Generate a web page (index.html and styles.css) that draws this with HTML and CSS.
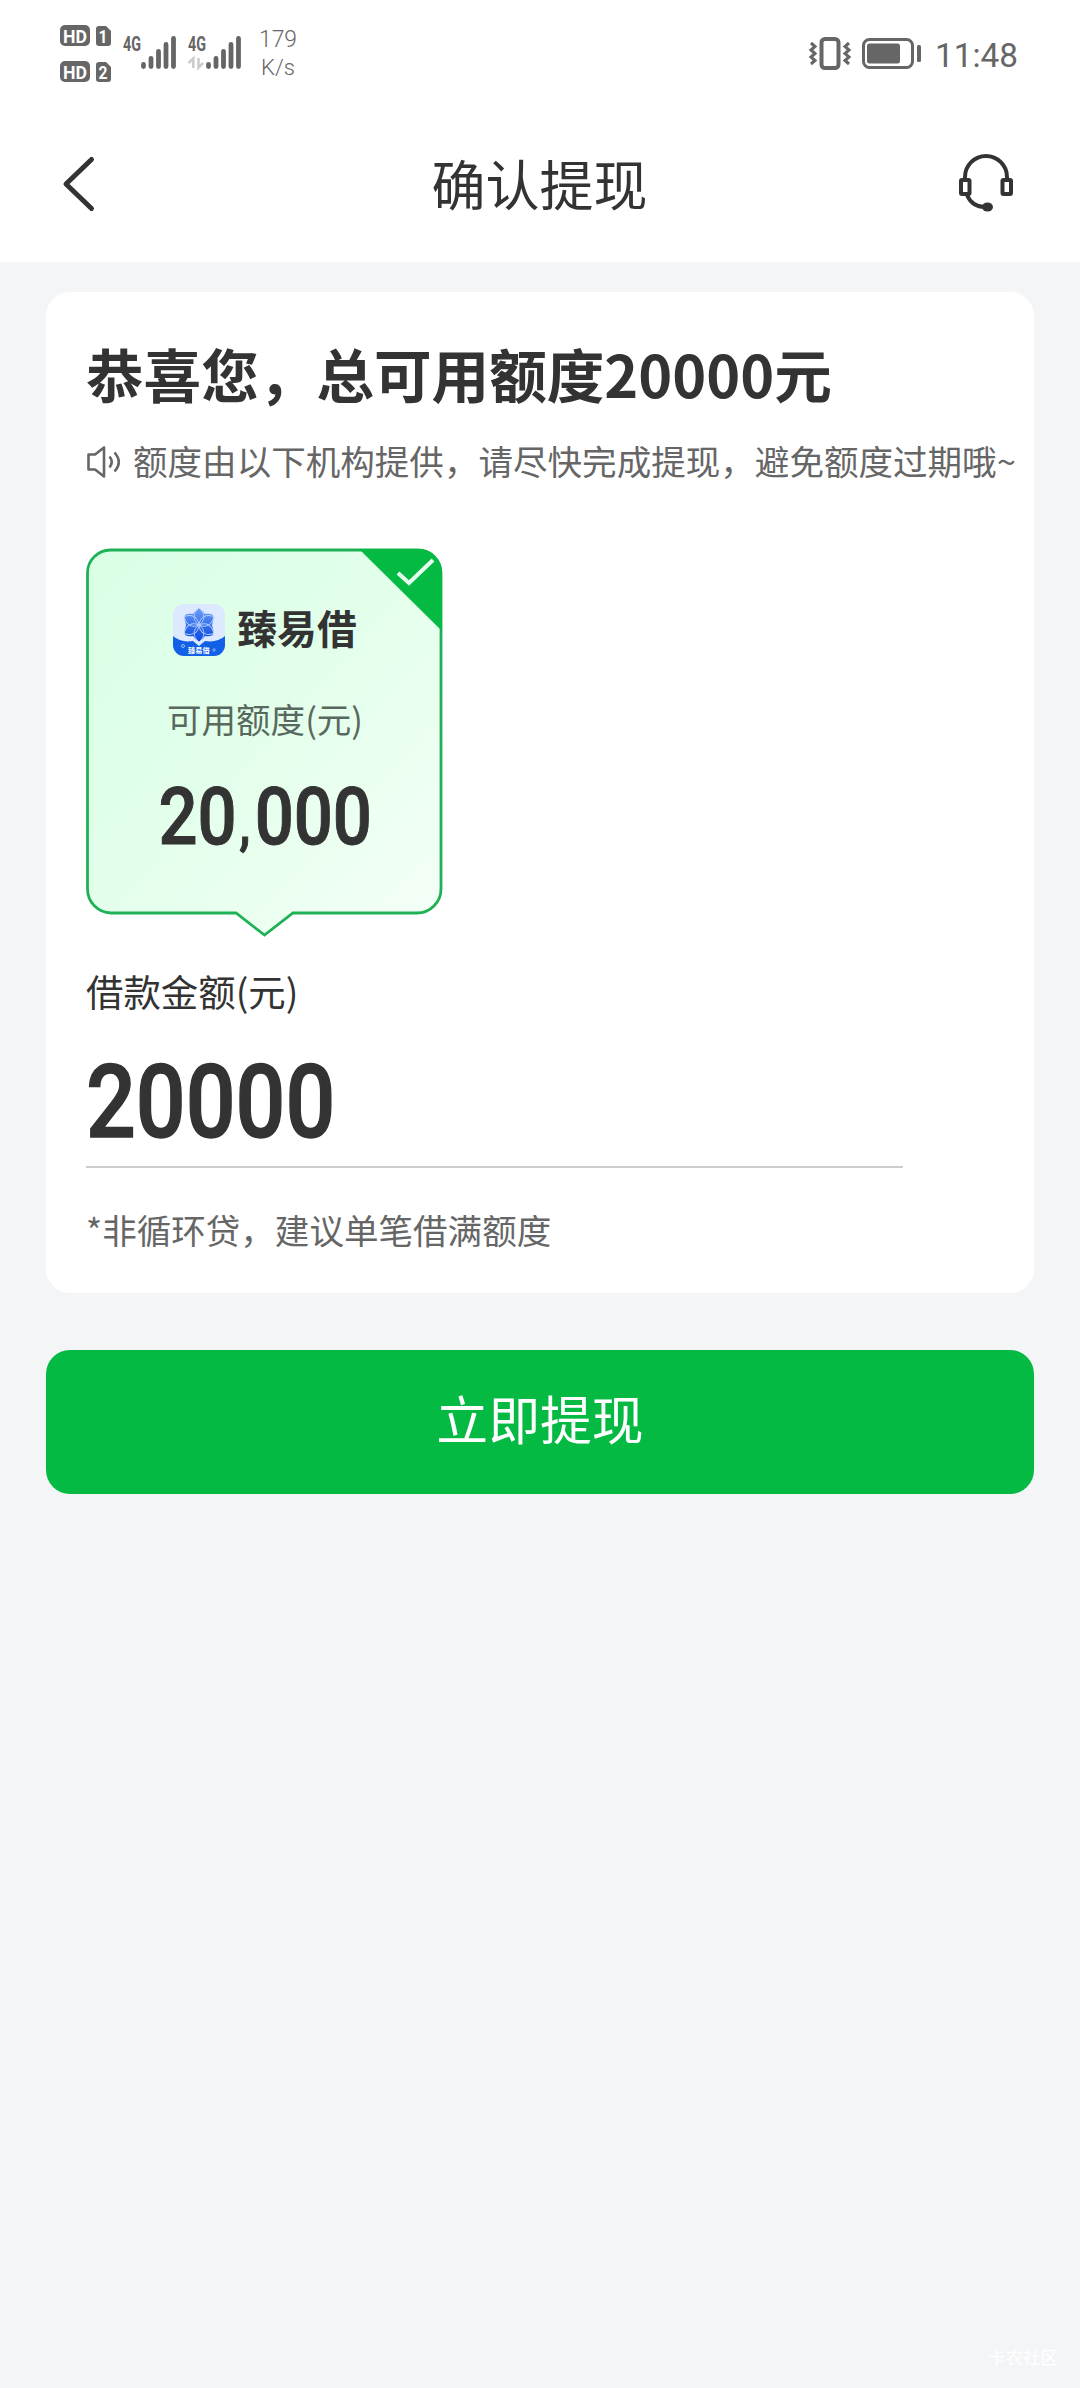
FILE: index.html
```html
<!DOCTYPE html>
<html lang="zh-CN">
<head>
<meta charset="utf-8">
<title>确认提现</title>
<link rel="stylesheet" href="styles.css">
</head>
<body>
<header class="top">
  <div class="status">
    <svg class="status-left" width="270" height="80" viewBox="0 0 270 80" fill="#666">
      <g class="st-bold">
        <rect x="10" y="15" width="30" height="21" rx="5"/><text x="13" y="32.500" fill="#fff" font-size="19" textLength="24" lengthAdjust="spacingAndGlyphs">HD</text>
        <rect x="10" y="51" width="30" height="21" rx="5"/><text x="13" y="68.500" fill="#fff" font-size="19" textLength="24" lengthAdjust="spacingAndGlyphs">HD</text>
        <path d="M49 16h7l5 5v12a3 3 0 0 1-3 3h-9a3 3 0 0 1-3-3V19a3 3 0 0 1 3-3z"/><text x="48.500" y="33" fill="#fff" font-size="18" textLength="9" lengthAdjust="spacingAndGlyphs">1</text>
        <path d="M49 52h7l5 5v12a3 3 0 0 1-3 3h-9a3 3 0 0 1-3-3V55a3 3 0 0 1 3-3z"/><text x="48.500" y="69" fill="#fff" font-size="18" textLength="9" lengthAdjust="spacingAndGlyphs">2</text>
        <text x="73" y="41" font-size="20" textLength="18" lengthAdjust="spacingAndGlyphs">4G</text>
        <text x="138" y="41" font-size="20" textLength="18" lengthAdjust="spacingAndGlyphs">4G</text>
      </g>
      <g stroke="#666" stroke-width="4.800" stroke-linecap="round">
        <path d="M93.500 54.500v2M101 48.500v8M108.500 41.500v15M116 34.500v22M123.500 28.500v28"/>
        <path d="M158.500 54.500v2M166 48.500v8M173.500 41.500v15M181 34.500v22M188.500 28.500v28"/>
      </g>
      <path d="M138.500 53l4.800-4.500V58M148.500 48v9.500l4.500-4.500" fill="none" stroke="#ccc" stroke-width="2.600"/>
      <g class="st-light"><text x="209" y="37" font-size="23" textLength="38" lengthAdjust="spacingAndGlyphs">179</text><text x="211" y="65" font-size="22" textLength="34" lengthAdjust="spacingAndGlyphs">K/s</text></g>
    </svg>
    <svg class="status-right" width="222" height="60" viewBox="0 0 222 60" fill="none" stroke="#666">
      <rect x="22.500" y="19" width="17" height="29" rx="3.500" stroke-width="4"/>
      <path d="M12 23l4 3.500-4 3.500 4 3.500-4 3.500 4 3.500-4 3.500M50 23l-4 3.500 4 3.500-4 3.500 4 3.500-4 3.500 4 3.500" stroke-width="3"/>
      <rect x="64.500" y="19.500" width="49" height="28" rx="6" stroke-width="3"/>
      <rect x="68" y="23.500" width="33" height="20" rx="2.500" fill="#666" stroke="none"/>
      <rect x="118" y="25" width="4" height="17" rx="1.500" fill="#666" stroke="none"/>
      <text class="st-reg" x="136" y="46.500" font-size="34" fill="#666" stroke="none" textLength="83" lengthAdjust="spacingAndGlyphs">11:48</text>
    </svg>
  </div>
  <nav class="nav">
    <svg width="48" height="64" viewBox="0 0 48 64" fill="none" stroke="#333" stroke-width="5" stroke-linecap="round" stroke-linejoin="round"><path d="M37.500 7.500L12 32l25.500 24.500"/></svg>
    <h1 class="nav-title">确认提现</h1>
    <svg width="60" height="60" viewBox="0 0 60 60" fill="none" stroke="#333" stroke-width="4"><path d="M9 26v-3a21 21 0 0 1 42 0v3M11 41c3 7 9 12 18 12"/><rect x="5" y="26" width="8.500" height="14" rx="1"/><rect x="46.500" y="26" width="8.500" height="14" rx="1"/><ellipse cx="31.500" cy="53" rx="5.500" ry="4.500" fill="#333" stroke="none"/></svg>
  </nav>
</header>
<main class="page">
  <section class="card">
    <h2 class="headline">恭喜您，总可用额度20000元</h2>
    <p class="notice">
      <svg width="36" height="34" viewBox="0 0 36 34" fill="none" stroke="#666" stroke-width="2.600" stroke-linejoin="round"><path d="M2.500 9.500h6.500l9-7v29l-9-7H2.500z"/><path d="M23.500 11.500q4.500 5.500 0 11M28.500 7.500q8.500 9.500 0 19"/></svg>
      <span>额度由以下机构提供，请尽快完成提现，避免额度过期哦~</span>
    </p>
    <div class="offer">
      <svg class="offer-frame" width="358" height="390" viewBox="0 0 358 390">
        <defs><linearGradient id="mint" x1="0" y1="0" x2="1" y2="1"><stop offset="0" stop-color="#d9ffe5"/><stop offset=".45" stop-color="#e2ffea"/><stop offset="1" stop-color="#f5fff8"/></linearGradient></defs>
        <path d="M25 2H332a23 23 0 0 1 23 23V341a24 24 0 0 1-24 24H207L178.500 387 150 365H25A24 24 0 0 1 1.500 341V25A23 23 0 0 1 25 2z" fill="url(#mint)" stroke="#1fb156" stroke-width="2.800"/>
        <path d="M273 1H332a24 24 0 0 1 24 24V83z" fill="#04ba43"/>
        <path d="M312 25l11 10 24-23" fill="none" stroke="#e4ffee" stroke-width="4"/>
      </svg>
      <div class="offer-brand">
        <svg width="52" height="52" viewBox="0 0 52 52">
          <defs>
            <linearGradient id="petal" gradientUnits="userSpaceOnUse" x1="26" y1="4" x2="26" y2="38"><stop offset="0" stop-color="#6a9ff8"/><stop offset="1" stop-color="#0643df"/></linearGradient>
            <clipPath id="tile"><rect width="52" height="52" rx="11"/></clipPath>
            <path id="leaf" d="M26 21c-7-5-6-12 0-17 6 5 7 12 0 17z"/>
          </defs>
          <g clip-path="url(#tile)">
            <rect width="52" height="52" fill="#dce9ff"/>
            <path d="M0 32q8 7 20 5l6 5 6-5q12 2 20-5v20H0z" fill="#1260e6"/>
            <path d="M26 4q4 3 6 6 4-1 8 1 1 5-1 10 2 5 1 10-4 2-8 1-2 3-6 6-4-3-6-6-4 1-8-1-1-5 1-10-2-5-1-10 4-2 8-1 2-3 6-6z" fill="url(#petal)"/>
            <g fill="none" stroke="#b4ceff" stroke-width=".9">
              <use href="#leaf"/><use href="#leaf" transform="rotate(60 26 21)"/><use href="#leaf" transform="rotate(120 26 21)"/><use href="#leaf" transform="rotate(180 26 21)"/><use href="#leaf" transform="rotate(240 26 21)"/><use href="#leaf" transform="rotate(300 26 21)"/>
            </g>
            <circle cx="10" cy="42" r="1.500" fill="none" stroke="#bcd6ff" stroke-width=".8"/><circle cx="41" cy="46" r="1.200" fill="none" stroke="#bcd6ff" stroke-width=".7"/>
            <text class="logo-text" x="15" y="49" font-size="7.200" fill="#fff">臻易借</text>
          </g>
        </svg>
        <span class="brand-name">臻易借</span>
      </div>
      <div class="offer-label">可用额度(元)</div>
      <div class="offer-amount">20<span class="comma">,</span>000</div>
    </div>
    <div class="loan-label">借款金额(元)</div>
    <div class="loan-field"><span class="loan-amount">20000</span></div>
    <p class="hint">*非循环贷，建议单笔借满额度</p>
  </section>
  <button class="submit" type="button">立即提现</button>
</main>
<footer class="watermark">卡农社区</footer>
</body>
</html>
```
FILE: styles.css
```css
* { box-sizing: border-box; }
body {
  margin: 0;
  width: 1080px;
  height: 2388px;
  display: flex;
  flex-direction: column;
  background: #f4f5f7;
  color: #333;
  font-family: "Noto Sans CJK SC", sans-serif;
}
h1, h2, p { margin: 0; font-weight: 400; }
svg { display: block; flex: none; }

.top { height: 262px; background: #fff; }
.status { height: 106px; padding: 10px 59px 0 50px; display: flex; justify-content: space-between; }
.status-right { margin-top: 10px; }
.st-bold { font-family: Roboto, sans-serif; font-weight: 700; }
.st-reg { font-family: Roboto, sans-serif; font-weight: 400; }
.st-light { font-family: Roboto, sans-serif; font-weight: 300; }
.nav { height: 156px; padding: 0 63px 0 54px; display: flex; align-items: center; justify-content: space-between; }
.nav-title { font-size: 54px; line-height: 80px; padding: 0 0 3px 21px; }
.nav-title + svg { margin-right: 1px; }

.page { padding: 30px 46px 0; }
.card { height: 1001px; padding: 41px 0 0 40px; background: #fff; border-radius: 24px; }
.headline { font-size: 57.600px; line-height: 80px; font-weight: 700; white-space: nowrap; }
.notice { margin-top: 24px; height: 50px; display: flex; align-items: center; gap: 11px; color: #666; font-size: 34.560px; line-height: 50px; white-space: nowrap; }
.notice span { padding-bottom: 4px; }
.offer { position: relative; margin-top: 61px; width: 358px; height: 390px; padding-top: 52px; display: flex; flex-direction: column; align-items: center; }
.offer-frame { position: absolute; left: 0; top: 0; }
.offer-brand, .offer-label, .offer-amount { position: relative; }
.offer-brand { height: 60px; display: flex; align-items: center; gap: 12px; font-size: 39.800px; font-weight: 700; }
.brand-name { padding-bottom: 8px; }
.logo-text { font-weight: 700; }
.offer-label { margin-top: 33px; font-size: 34.560px; line-height: 50px; color: #59685e; }
.offer-amount { margin-top: 24px; font: 500 80px/100px Roboto, sans-serif; -webkit-text-stroke: 1px #333; transform: scaleX(.86); white-space: nowrap; }
.comma { margin: 0 5px 0 3px; font-size: 58px; }
.loan-label { margin-top: 25px; font-size: 37.440px; line-height: 56px; }
.loan-field { width: 817px; height: 149px; padding-top: 28px; border-bottom: 2px solid #ccc; }
.loan-amount { display: inline-block; font: 500 102px/110px Roboto, sans-serif; -webkit-text-stroke: 1.400px #333; transform: scaleX(.86); transform-origin: left; }
.hint { margin-top: 36px; color: #666; font-size: 34.560px; line-height: 50px; }
.submit {
  width: 100%;
  height: 144px;
  margin-top: 57px;
  padding: 0 0 8px;
  border: 0;
  border-radius: 24px;
  background: #04ba43;
  color: #fff;
  font: 400 51.840px/76px "Noto Sans CJK SC", sans-serif;
}
.watermark { margin-top: auto; padding: 0 22px 18px 0; text-align: right; font-size: 17.500px; line-height: 26px; color: #fff; }
```
